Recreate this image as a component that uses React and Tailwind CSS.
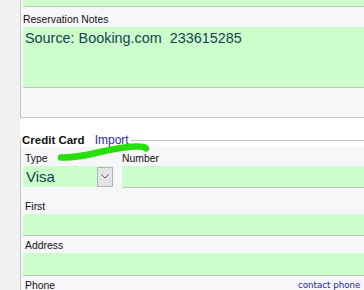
import React from "react";

const GREEN = "bg-[#ccffcc]";

function Label({ children, className = "" }) {
  return (
    <div className={`text-[10.4px] leading-[13px] text-[#111] ${className}`}>{children}</div>
  );
}

export default function App() {
  return (
    <div
      className="relative flex h-[290px] w-[364px] overflow-hidden bg-white"
      style={{ fontFamily: '"Liberation Sans", Arial, sans-serif' }}
    >
      <div className="w-[20px] shrink-0 bg-[#f1f1f1]" />

      <div className="flex-1">
        {/* reservation notes panel */}
        <section className="h-[118px] border-b border-l border-[#c4c4c4] bg-[#f7f7f9] pl-[2px]">
          <div className={`h-[7px] border-b border-[#c4c4c4] ${GREEN}`} />
          <Label className="mt-[6px]">Reservation Notes</Label>
          <div
            className={`mt-[1px] h-[61px] border-b border-[#c4c4c4] pl-[2px] pt-[2px] text-[14.4px] leading-[18px] text-[#173f4f] ${GREEN}`}
          >
            Source: Booking.com&nbsp; 233615285
          </div>
        </section>

        {/* credit card */}
        <section className="mt-[15px]">
          <div className="flex h-[14px] items-center">
            <span className="h-[7px] w-px self-end bg-[#c4c4c4]" />
            <span className="ml-[1px] text-[11.5px] font-bold leading-[14px] text-[#111]">
              Credit Card
            </span>
            <span className="ml-[10px] text-[12px] leading-[14px] text-[#2b2b9a]">Import</span>
            <span className="ml-[2px] h-px flex-1 bg-[#c4c4c4]" />
          </div>

          <div className="h-[160px] border-l border-[#c4c4c4] bg-[#f7f7f9] pl-[2px] pt-[5px]">
            <div className="flex">
              <div className="w-[90px]">
                <Label className="pl-[2px]">Type</Label>
                <div className={`mt-[1px] flex h-[21px] items-center ${GREEN}`}>
                  <span className="flex-1 pl-[3px] text-[15px] leading-[18px] text-[#173f4f]">
                    Visa
                  </span>
                  <span className="flex h-[20px] w-[16px] items-center justify-center border border-[#b4b4b4] bg-[#e4e4e4]">
                    <svg width="8" height="5" viewBox="0 0 8 5">
                      <path d="M0.5 0.5 L4 4 L7.5 0.5" fill="none" stroke="#555" strokeWidth="1" />
                    </svg>
                  </span>
                </div>
              </div>
              <div className="ml-[9px] flex-1">
                <Label>Number</Label>
                <div className={`mt-[1px] h-[22px] border-b border-[#c4c4c4] ${GREEN}`} />
              </div>
            </div>

            <Label className="mt-[12px] pl-[2px]">First</Label>
            <div className={`mt-[1px] h-[22px] border-b border-[#c4c4c4] ${GREEN}`} />

            <Label className="mt-[3px] pl-[2px]">Address</Label>
            <div className={`mt-[1px] h-[23px] border-b border-[#c4c4c4] ${GREEN}`} />

            <div className="mt-[3px] flex">
              <Label className="flex-1 pl-[2px]">Phone</Label>
              <span
                className="w-[66px] whitespace-nowrap text-[8.7px] leading-[13px] text-[#2323a0]"
                style={{ fontFamily: '"DejaVu Sans", Verdana, sans-serif' }}
              >
                contact phone
              </span>
            </div>
          </div>
        </section>
      </div>

      {/* green marker scribble over the form */}
      <svg
        className="pointer-events-none absolute left-0 top-0"
        width="364"
        height="290"
        viewBox="0 0 364 290"
      >
        <path
          d="M61 157.5 C 75 158, 88 155, 100 152 C 113 149, 125 147, 136 146.5 C 142 146.3, 146 147, 146 148.5"
          fill="none"
          stroke="#26e00c"
          strokeWidth="6.5"
          strokeLinecap="round"
        />
      </svg>
    </div>
  );
}
